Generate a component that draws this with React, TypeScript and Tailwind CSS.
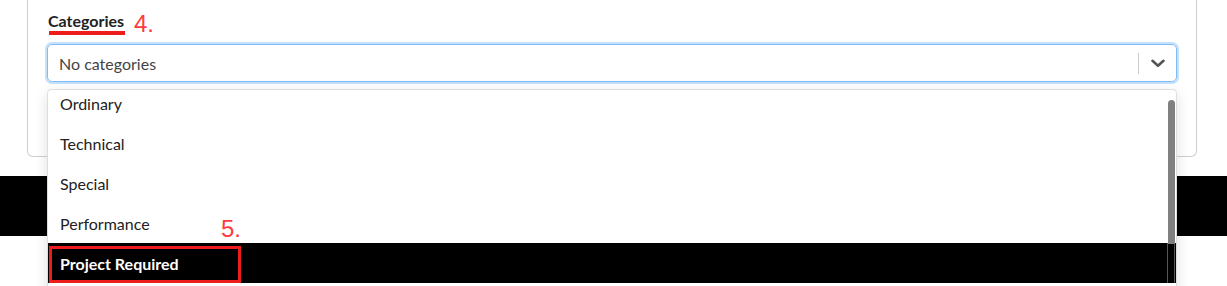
import React from "react";

const annot = { fontFamily: '"Liberation Sans", Arial, sans-serif' };

export default function App() {
  const items = ["Ordinary", "Technical", "Special", "Performance"];
  return (
    <div
      className="relative w-[1227px] h-[286px] overflow-hidden bg-white"
      style={{ fontFamily: 'Lato, "Noto Sans", sans-serif' }}
    >
      <div className="ml-[27px] w-[1170px] h-[157px] border-x border-b border-[#cfcfcf] rounded-b-[6px] px-[19px] pt-[11px]">
        <div className="flex items-start gap-[9px] h-[25px]">
          <div>
            <span className="block text-[16px] leading-[20px] font-bold text-[#222222] pl-[1px]">
              Categories
            </span>
            <div className="h-[4px] ml-[2px] w-[76px] bg-[#ee1c1c]" />
          </div>
          <span className="mt-[1px] text-[24px] leading-[24px] text-[#ff3b3b]" style={annot}>
            4.
          </span>
        </div>
        <div className="mt-[8px] h-[38px] rounded-[5px] border border-[#80bbf5] shadow-[0_0_0_2px_#c5e0fd] flex items-center">
          <span className="flex-1 pl-[11px] text-[16px] leading-[19px] text-[#444444]">
            No categories
          </span>
          <div className="w-px h-[21px] bg-[#cccccc]" />
          <div className="w-[37px] flex justify-center items-center">
            <svg width="14" height="9" viewBox="0 0 14 9" fill="none">
              <path
                d="M1.5 1.8 L7 6.8 L12.5 1.8"
                stroke="#555555"
                strokeWidth="2.6"
                strokeLinecap="round"
                strokeLinejoin="round"
              />
            </svg>
          </div>
        </div>
      </div>
      <div className="mt-[19px] h-[60px] bg-black" />

      <div className="absolute left-[47px] top-[89px] w-[1130px] h-[220px] border border-[#dedede] rounded-[4px] bg-white shadow-[0_4px_14px_rgba(0,0,0,0.12)] overflow-hidden">
        <div className="-mt-[7px]">
          {items.map((it) => (
            <div
              key={it}
              className="h-[40px] px-[12px] flex items-center text-[16px] leading-[19px] text-[#222222]"
            >
              {it}
            </div>
          ))}
          <div className="relative h-[40px] px-[12px] flex items-center text-[16px] leading-[19px] font-bold text-white bg-black">
            <div className="relative">
              Project Required
              <span
                className="absolute left-[161px] -top-[37px] text-[24px] leading-[24px] font-normal text-[#ff3b3b]"
                style={annot}
              >
                5.
              </span>
            </div>
            <div className="absolute left-[1px] top-[3px] w-[192px] h-[37px] border-[3px] border-[#ee1c1c]" />
            <div className="absolute right-[8px] top-0 h-[40px] w-px bg-[#555555]" />
            <div className="absolute right-[1px] top-0 h-[40px] w-px bg-[#555555]" />
          </div>
        </div>
        <div className="absolute right-[1px] top-[10px] w-[7px] h-[144px] rounded-t-full bg-[#808080]" />
      </div>
    </div>
  );
}
